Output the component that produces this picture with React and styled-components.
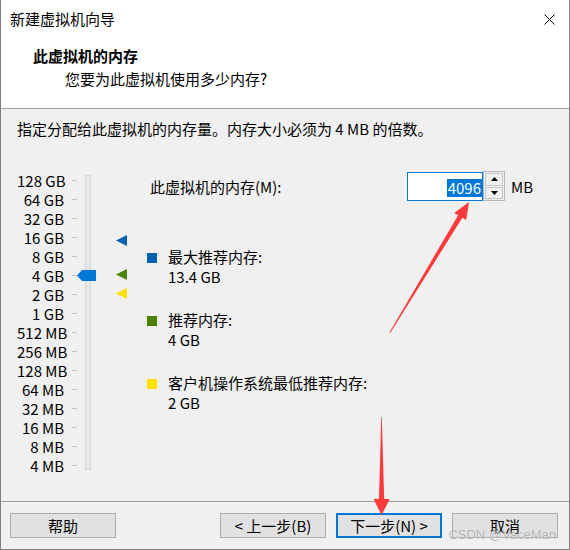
import React from 'react';
import styled, { createGlobalStyle } from 'styled-components';

const FONT = `"Noto Sans CJK SC", "Noto Sans", sans-serif`;

const Global = createGlobalStyle`
  html, body { margin: 0; padding: 0; background: #f0f0f0; }
  body { font-family: ${FONT}; }
  * { box-sizing: border-box; }
`;

const Window = styled.div`
  position: relative;
  width: 570px;
  height: 550px;
  border: 1px solid #808080;
  border-top: none;
  background: #f0f0f0;
  display: flex;
  flex-direction: column;
  font-family: ${FONT};
  font-size: 15px;
  color: #000;
  overflow: hidden;
`;

const TitleBar = styled.div`
  height: 38px;
  background: #fff;
  display: flex;
  align-items: center;
  padding-left: 9px;
  line-height: 20px;
`;

const CloseButton = styled.div`
  margin-left: auto;
  width: 40px;
  height: 38px;
  display: flex;
  align-items: center;
  justify-content: center;
`;

const Header = styled.div`
  background: #fff;
  padding: 8px 0 19px 32px;
  border-bottom: 1px solid #a0a0a0;
`;

const Heading = styled.div`
  font-weight: bold;
  line-height: 20px;
`;

const SubHeading = styled.div`
  line-height: 20px;
  margin: 3px 0 0 32px;
`;

const Body = styled.div`
  flex: 1;
  padding: 10px 0 0 16px;
`;

const Instruction = styled.div`
  line-height: 20px;
`;

const Content = styled.div`
  display: flex;
  margin-top: 32px;
`;

const Slider = styled.div`
  display: flex;
  align-items: flex-start;
`;

const Scale = styled.div`
  display: flex;
  flex-direction: column;
`;

const ScaleRow = styled.div`
  height: 19px;
  display: flex;
  align-items: center;
`;

const ScaleLabel = styled.span`
  width: 47px;
  text-align: right;
  line-height: 19px;
  white-space: nowrap;
`;

const Tick = styled.span`
  width: 5px;
  height: 1px;
  margin-left: 8px;
  background: #c4c4c4;
`;

const Track = styled.div`
  position: relative;
  width: 6px;
  height: 295px;
  margin: 4px 0 0 8px;
  background: #e7e7e7;
  border: 1px solid #d6d6d6;
`;

const Thumb = styled.div`
  position: absolute;
  left: -9px;
  width: 19px;
  height: 11px;
  background: #0078d7;
  clip-path: polygon(0 50%, 5px 0, 100% 0, 100% 100%, 5px 100%);
`;

const MarkerLane = styled.div`
  position: relative;
  width: 11px;
  height: 300px;
  margin-left: 25px;
`;

const Marker = styled.div`
  position: absolute;
  left: 0;
  width: 11px;
  height: 11px;
  background: ${(p) => p.$color};
  clip-path: polygon(0 50%, 100% 0, 100% 100%);
`;

const RightPane = styled.div`
  margin-left: 20px;
  padding-top: 1px;
  display: flex;
  flex-direction: column;
`;

const MemoryRow = styled.div`
  display: flex;
  align-items: center;
  height: 29px;
`;

const FieldLabel = styled.span`
  width: 260px;
  padding-left: 3px;
  line-height: 20px;
`;

const NumberBox = styled.div`
  width: 76px;
  height: 29px;
  border: 1px solid #0078d7;
  background: #fff;
  display: flex;
  align-items: center;
  justify-content: flex-end;
`;

const Selected = styled.span`
  background: #0078d7;
  color: #fff;
  line-height: 18px;
  padding: 0 1px;
  margin-top: 2px;
`;

const Spinner = styled.div`
  width: 22px;
  height: 30px;
  border: 1px solid #b8b8b8;
  background: #f0f0f0;
  display: flex;
  flex-direction: column;
  gap: 1px;
  padding: 1px;
  margin-top: -1px;
`;

const SpinButton = styled.div`
  flex: 1;
  border: 1px solid #c6c6c6;
  background: #f0f0f0;
  display: flex;
  align-items: center;
  justify-content: center;
`;

const Unit = styled.span`
  margin-left: 6px;
  line-height: 20px;
`;

const Legend = styled.div`
  margin-top: 46px;
  display: flex;
  flex-direction: column;
  gap: 23px;
`;

const LegendItem = styled.div`
  display: flex;
  align-items: flex-start;
`;

const Swatch = styled.span`
  width: 10px;
  height: 10px;
  margin-top: 6px;
  margin-right: 11px;
  background: ${(p) => p.$color};
  flex: none;
`;

const LegendText = styled.div`
  line-height: 20px;
`;

const Footer = styled.div`
  border-top: 1px solid #a0a0a0;
  padding: 11px 11px 11px 9px;
  display: flex;
  gap: 10px;
`;

const Button = styled.div`
  width: 106px;
  height: 25px;
  border: ${(p) => (p.$primary ? '2px solid #0078d7' : '1px solid #adadad')};
  background: #e1e1e1;
  display: flex;
  align-items: center;
  justify-content: center;
  line-height: 20px;
  margin-right: ${(p) => (p.$pushRight ? 'auto' : '0')};
`;

const Overlay = styled.svg`
  position: absolute;
  left: 0;
  top: 0;
  pointer-events: none;
`;

const Watermark = styled.div`
  position: absolute;
  right: 13px;
  bottom: 7px;
  font-family: "Liberation Sans", Arial, sans-serif;
  font-size: 13px;
  color: rgba(120, 120, 120, 0.55);
  text-shadow: 0 0 1px rgba(255, 255, 255, 0.9);
  pointer-events: none;
`;

const scale = [
  '128 GB', '64 GB', '32 GB', '16 GB', '8 GB', '4 GB', '2 GB', '1 GB',
  '512 MB', '256 MB', '128 MB', '64 MB', '32 MB', '16 MB', '8 MB', '4 MB',
];

const markers = [
  { color: '#0063b1', top: 64 },
  { color: '#498205', top: 98 },
  { color: '#fce100', top: 117 },
];

const legend = [
  { color: '#0063b1', label: '最大推荐内存:', value: '13.4 GB' },
  { color: '#498205', label: '推荐内存:', value: '4 GB' },
  { color: '#fce100', label: '客户机操作系统最低推荐内存:', value: '2 GB' },
];

const ROW = 19;
const thumbIndex = 5;

export default function App() {
  return (
    <>
      <Global />
      <Window>
        <TitleBar>
          新建虚拟机向导
          <CloseButton>
            <svg width="11" height="11" viewBox="0 0 11 11">
              <path d="M0.5 0.5 L10.5 10.5 M10.5 0.5 L0.5 10.5" stroke="#000" strokeWidth="1" />
            </svg>
          </CloseButton>
        </TitleBar>
        <Header>
          <Heading>此虚拟机的内存</Heading>
          <SubHeading>您要为此虚拟机使用多少内存?</SubHeading>
        </Header>
        <Body>
          <Instruction>指定分配给此虚拟机的内存量。内存大小必须为 4 MB 的倍数。</Instruction>
          <Content>
            <Slider>
              <Scale>
                {scale.map((s) => (
                  <ScaleRow key={s}>
                    <ScaleLabel>{s}</ScaleLabel>
                    <Tick />
                  </ScaleRow>
                ))}
              </Scale>
              <Track>
                <Thumb style={{ top: thumbIndex * ROW + ROW / 2 - 5.5 - 5 }} />
              </Track>
              <MarkerLane>
                {markers.map((m) => (
                  <Marker key={m.color} $color={m.color} style={{ top: m.top }} />
                ))}
              </MarkerLane>
            </Slider>
            <RightPane>
              <MemoryRow>
                <FieldLabel>此虚拟机的内存(M):</FieldLabel>
                <NumberBox>
                  <Selected>4096</Selected>
                </NumberBox>
                <Spinner>
                  <SpinButton>
                    <svg width="7" height="4" viewBox="0 0 7 4">
                      <path d="M0 4 L3.5 0 L7 4 Z" fill="#000" />
                    </svg>
                  </SpinButton>
                  <SpinButton>
                    <svg width="7" height="4" viewBox="0 0 7 4">
                      <path d="M0 0 L3.5 4 L7 0 Z" fill="#000" />
                    </svg>
                  </SpinButton>
                </Spinner>
                <Unit>MB</Unit>
              </MemoryRow>
              <Legend>
                {legend.map((l) => (
                  <LegendItem key={l.label}>
                    <Swatch $color={l.color} />
                    <LegendText>
                      <div>{l.label}</div>
                      <div>{l.value}</div>
                    </LegendText>
                  </LegendItem>
                ))}
              </Legend>
            </RightPane>
          </Content>
        </Body>
        <Footer>
          <Button $pushRight>帮助</Button>
          <Button>&lt; 上一步(B)</Button>
          <Button $primary>下一步(N) &gt;</Button>
          <Button>取消</Button>
        </Footer>
        <Watermark>CSDN @VaceMan</Watermark>
        <Overlay width="570" height="550" viewBox="0 0 570 550">
          <polygon
            points="388.6,332.3 457.1,215.2 453.2,212.9 468,202 465.2,220.1 461.3,217.8 389.4,332.7"
            fill="#fb3b3b"
          />
          <polygon
            points="380.2,417 378,499 372.5,499 380.5,515 388.8,499 383.2,499 380.8,417"
            fill="#fb3b3b"
          />
        </Overlay>
      </Window>
    </>
  );
}
